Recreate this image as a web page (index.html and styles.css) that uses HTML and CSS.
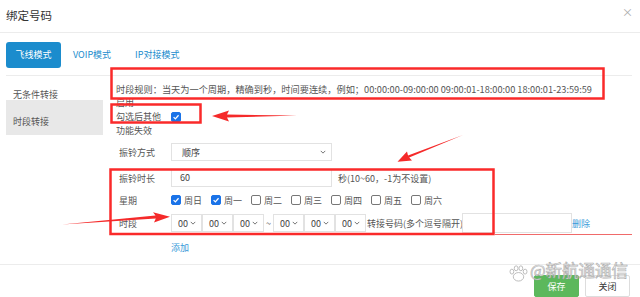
FILE: index.html
```html
<!DOCTYPE html>
<html lang="zh-CN">

<head>
  <meta charset="UTF-8">
  <meta name="viewport" content="width=device-width, initial-scale=1.0">
  <title>绑定号码</title>
  <link rel="stylesheet" href="styles.css">
</head>

<body>
  <div class="modal">
    <div class="modal-header">
      <h3>绑定号码</h3>
      <span class="close">×</span>
    </div>

    <div class="modal-body">
      <div class="tabs">
        <span class="tab active">飞线模式</span>
        <span class="tab">VOIP模式</span>
        <span class="tab">IP对接模式</span>
      </div>

      <div class="tab-pane">
        <div class="side-menu">
          <div class="side-item">无条件转接</div>
          <div class="side-item selected">时段转接</div>
        </div>

        <div class="pane-content">
          <p class="rule">时段规则：当天为一个周期，精确到秒，时间要连续，例如；00:00:00-09:00:00 09:00:01-18:00:00 18:00:01-23:59:59</p>

          <div class="enable">
            <div>启用</div>
            <div class="enable-line">勾选后其他<span class="cb on"><svg viewBox="0 0 10 10"><path d="M2 5.2 4.2 7.3 8.2 2.8" /></svg></span></div>
            <div>功能失效</div>
          </div>

          <div class="form-row mode-row">
            <label>振铃方式</label>
            <div class="sel wide">顺序<svg class="chev" viewBox="0 0 8 5"><path d="M1 1 4 4 7 1" /></svg></div>
          </div>

          <div class="form-row ring-row">
            <label>振铃时长</label>
            <div class="text-input wide">60</div>
            <span class="hint">秒(10~60，-1为不设置)</span>
          </div>

          <div class="form-row week-row">
            <label>星期</label>
            <span class="day"><span class="cb on"><svg viewBox="0 0 10 10"><path d="M2 5.2 4.2 7.3 8.2 2.8" /></svg></span>周日</span>
            <span class="day"><span class="cb on"><svg viewBox="0 0 10 10"><path d="M2 5.2 4.2 7.3 8.2 2.8" /></svg></span>周一</span>
            <span class="day"><span class="cb"></span>周二</span>
            <span class="day"><span class="cb"></span>周三</span>
            <span class="day"><span class="cb"></span>周四</span>
            <span class="day"><span class="cb"></span>周五</span>
            <span class="day"><span class="cb"></span>周六</span>
          </div>

          <div class="form-row time-row">
            <label>时段</label>
            <div class="sel small">00<svg class="chev" viewBox="0 0 8 5"><path d="M1 1 4 4 7 1" /></svg></div>
            <div class="sel small">00<svg class="chev" viewBox="0 0 8 5"><path d="M1 1 4 4 7 1" /></svg></div>
            <div class="sel small">00<svg class="chev" viewBox="0 0 8 5"><path d="M1 1 4 4 7 1" /></svg></div>
            <span class="tilde">~</span>
            <div class="sel small">00<svg class="chev" viewBox="0 0 8 5"><path d="M1 1 4 4 7 1" /></svg></div>
            <div class="sel small">00<svg class="chev" viewBox="0 0 8 5"><path d="M1 1 4 4 7 1" /></svg></div>
            <div class="sel small">00<svg class="chev" viewBox="0 0 8 5"><path d="M1 1 4 4 7 1" /></svg></div>
            <span class="fwd">转接号码(多个逗号隔开)</span>
            <div class="text-input number"></div>
            <a class="link">删除</a>
          </div>

          <a class="link add">添加</a>
        </div>
      </div>
    </div>

    <div class="modal-footer">
      <button class="btn save">保存</button>
      <button class="btn">关闭</button>
    </div>
  </div>

  <!-- 标注 -->
  <svg class="marks" width="640" height="297" viewBox="0 0 640 297">
    <g fill="none" stroke="#fa2a2a" stroke-width="2.5">
      <rect x="111.5" y="68.5" width="492" height="30" />
      <rect x="111.5" y="104.5" width="89" height="18" />
      <rect x="110.5" y="169.5" width="383" height="64.5" />
    </g>
    <line x1="494" y1="234.5" x2="632" y2="234.5" stroke="#f06a6a" stroke-width="1" />
    <g fill="#f52a2a">
      <polygon points="212,116 229,110.5 227,114.6 297,115.6 227,117.6 229,121.5" />
      <polygon points="397.5,161.8 407,151.5 408,155.4 463,135 409.2,157.6 412,160.6" />
      <polygon points="170,216.8 153,212.2 155.5,215.6 62,224.6 155.8,218.4 154,222.5" />
    </g>
  </svg>

  <div class="watermark">
    <svg class="paw" viewBox="0 0 22 18">
      <g fill="rgba(255,255,255,.85)" stroke="#b9b9b9" stroke-width="1">
        <ellipse cx="11" cy="12.5" rx="5.5" ry="4.5" />
        <ellipse cx="4" cy="7" rx="2" ry="2.6" />
        <ellipse cx="8.5" cy="3.5" rx="2" ry="2.6" />
        <ellipse cx="13.5" cy="3.5" rx="2" ry="2.6" />
        <ellipse cx="18" cy="7" rx="2" ry="2.6" />
      </g>
    </svg>
    <span>@新航通通信</span>
  </div>
</body>

</html>
```

FILE: styles.css
```css
body {
  margin: 0;
  font-family: "Noto Sans CJK SC", "Noto Sans", sans-serif;
  font-size: 9px;
  color: #555;
  background: white;
  position: relative;
  width: 640px;
  height: 297px;
  overflow: hidden;
}

.modal-header {
  height: 32px;
  border-bottom: 1px solid #ececec;
  display: flex;
  align-items: center;
  justify-content: space-between;
  padding: 0 7px 0 6px;
  box-sizing: content-box;
}

.modal-header h3 {
  margin: 0;
  font-size: 11.5px;
  font-weight: normal;
  color: #333;
  margin-top: -2px;
}

.close {
  color: #aaa;
  font-size: 11px;
  margin-top: -8px;
}

.modal-body {
  height: 231px;
  padding: 0 8px 0 6px;
}

.tabs {
  display: flex;
  align-items: center;
  padding-top: 9px;
  padding-bottom: 7px;
  border-bottom: 1px solid #ececec;
}

.tab {
  height: 26px;
  line-height: 26px;
  padding: 0 12px;
  color: #1b8ccd;
}

.tab.active {
  background: #1b8ccd;
  color: white;
  border-radius: 3px;
  width: 55px;
  padding: 0;
  text-align: center;
}

.tab-pane {
  display: flex;
}

.side-menu {
  width: 97px;
  padding-top: 7px;
}

.side-item {
  padding: 7px 7px 0;
  line-height: 10px;
  height: 10px;
  color: #555;
}

.side-item.selected {
  background: #e8e8e8;
  padding: 17px 7px 8px;
}

.pane-content {
  margin-left: 13px;
  flex: 1;
}

.rule {
  margin: 0;
  padding-top: 7px;
  line-height: 12px;
  white-space: nowrap;
  font-size: 9.2px;
}

.enable {
  margin-top: 1px;
  line-height: 14px;
}

.enable-line {
  display: flex;
  align-items: center;
}

.enable-line .cb {
  margin-left: 10px;
}

.cb {
  display: inline-block;
  width: 10px;
  height: 10px;
  box-sizing: border-box;
  border: 1px solid #777;
  border-radius: 2px;
  background: white;
}

.cb.on {
  background: #1a73e8;
  border-color: #1a73e8;
}

.cb svg {
  display: block;
  width: 8px;
  height: 8px;
}

.cb svg path {
  fill: none;
  stroke: white;
  stroke-width: 1.6;
}

.form-row {
  display: flex;
  align-items: center;
}

.form-row label {
  width: 52px;
  padding-left: 3px;
  flex: none;
}

.mode-row {
  margin-top: 5px;
}

.ring-row {
  margin-top: 8px;
}

.week-row {
  margin-top: 4px;
  height: 18px;
}

.time-row {
  margin-top: 4px;
}

.sel {
  display: flex;
  align-items: center;
  justify-content: space-between;
  box-sizing: border-box;
  height: 18px;
  border: 1px solid #e2e2e2;
  padding: 0 5px 0 6px;
  color: #444;
  background: white;
}

.sel.wide {
  width: 161px;
  padding-left: 10px;
}

.sel.small {
  width: 31px;
}

.chev {
  width: 6px;
  height: 4px;
}

.chev path {
  fill: none;
  stroke: #666;
  stroke-width: 1.2;
}

.text-input {
  box-sizing: border-box;
  height: 18px;
  line-height: 16px;
  border: 1px solid #e2e2e2;
  padding: 0 8px;
  color: #444;
}

.text-input.wide {
  width: 161px;
}

.hint {
  margin-left: 6px;
}

.day {
  display: flex;
  align-items: center;
  width: 40px;
}

.day .cb {
  margin-right: 3px;
}

.tilde {
  width: 9px;
  text-align: center;
}

.fwd {
  margin-left: 1px;
  width: 95px;
  white-space: nowrap;
}

.text-input.number {
  width: 110px;
  height: 20px;
}

.link {
  color: #3a9ad9;
}

.add {
  display: block;
  margin-top: 9px;
  margin-left: 55px;
  line-height: 12px;
}

.modal-footer {
  border-top: 1px solid #ececec;
  display: flex;
  justify-content: flex-end;
  gap: 6px;
  padding: 10px 10px 0;
}

.btn {
  width: 45px;
  height: 22px;
  font: inherit;
  border: 1px solid #ddd;
  background: white;
  color: #333;
  border-radius: 2px;
}

.btn.save {
  background: #5cb85c;
  border-color: #5cb85c;
  color: white;
}

.marks {
  position: absolute;
  top: 0;
  left: 0;
  pointer-events: none;
}

.watermark {
  position: absolute;
  left: 508px;
  top: 257px;
  display: flex;
  align-items: center;
  gap: 1px;
  pointer-events: none;
}

.paw {
  width: 21px;
  height: 17px;
  margin-top: 8px;
}

.watermark span {
  font-size: 16.5px;
  line-height: 24px;
  color: rgba(255, 255, 255, 0.85);
  -webkit-text-stroke: 0.7px rgba(150, 150, 150, 0.75);
}
```
